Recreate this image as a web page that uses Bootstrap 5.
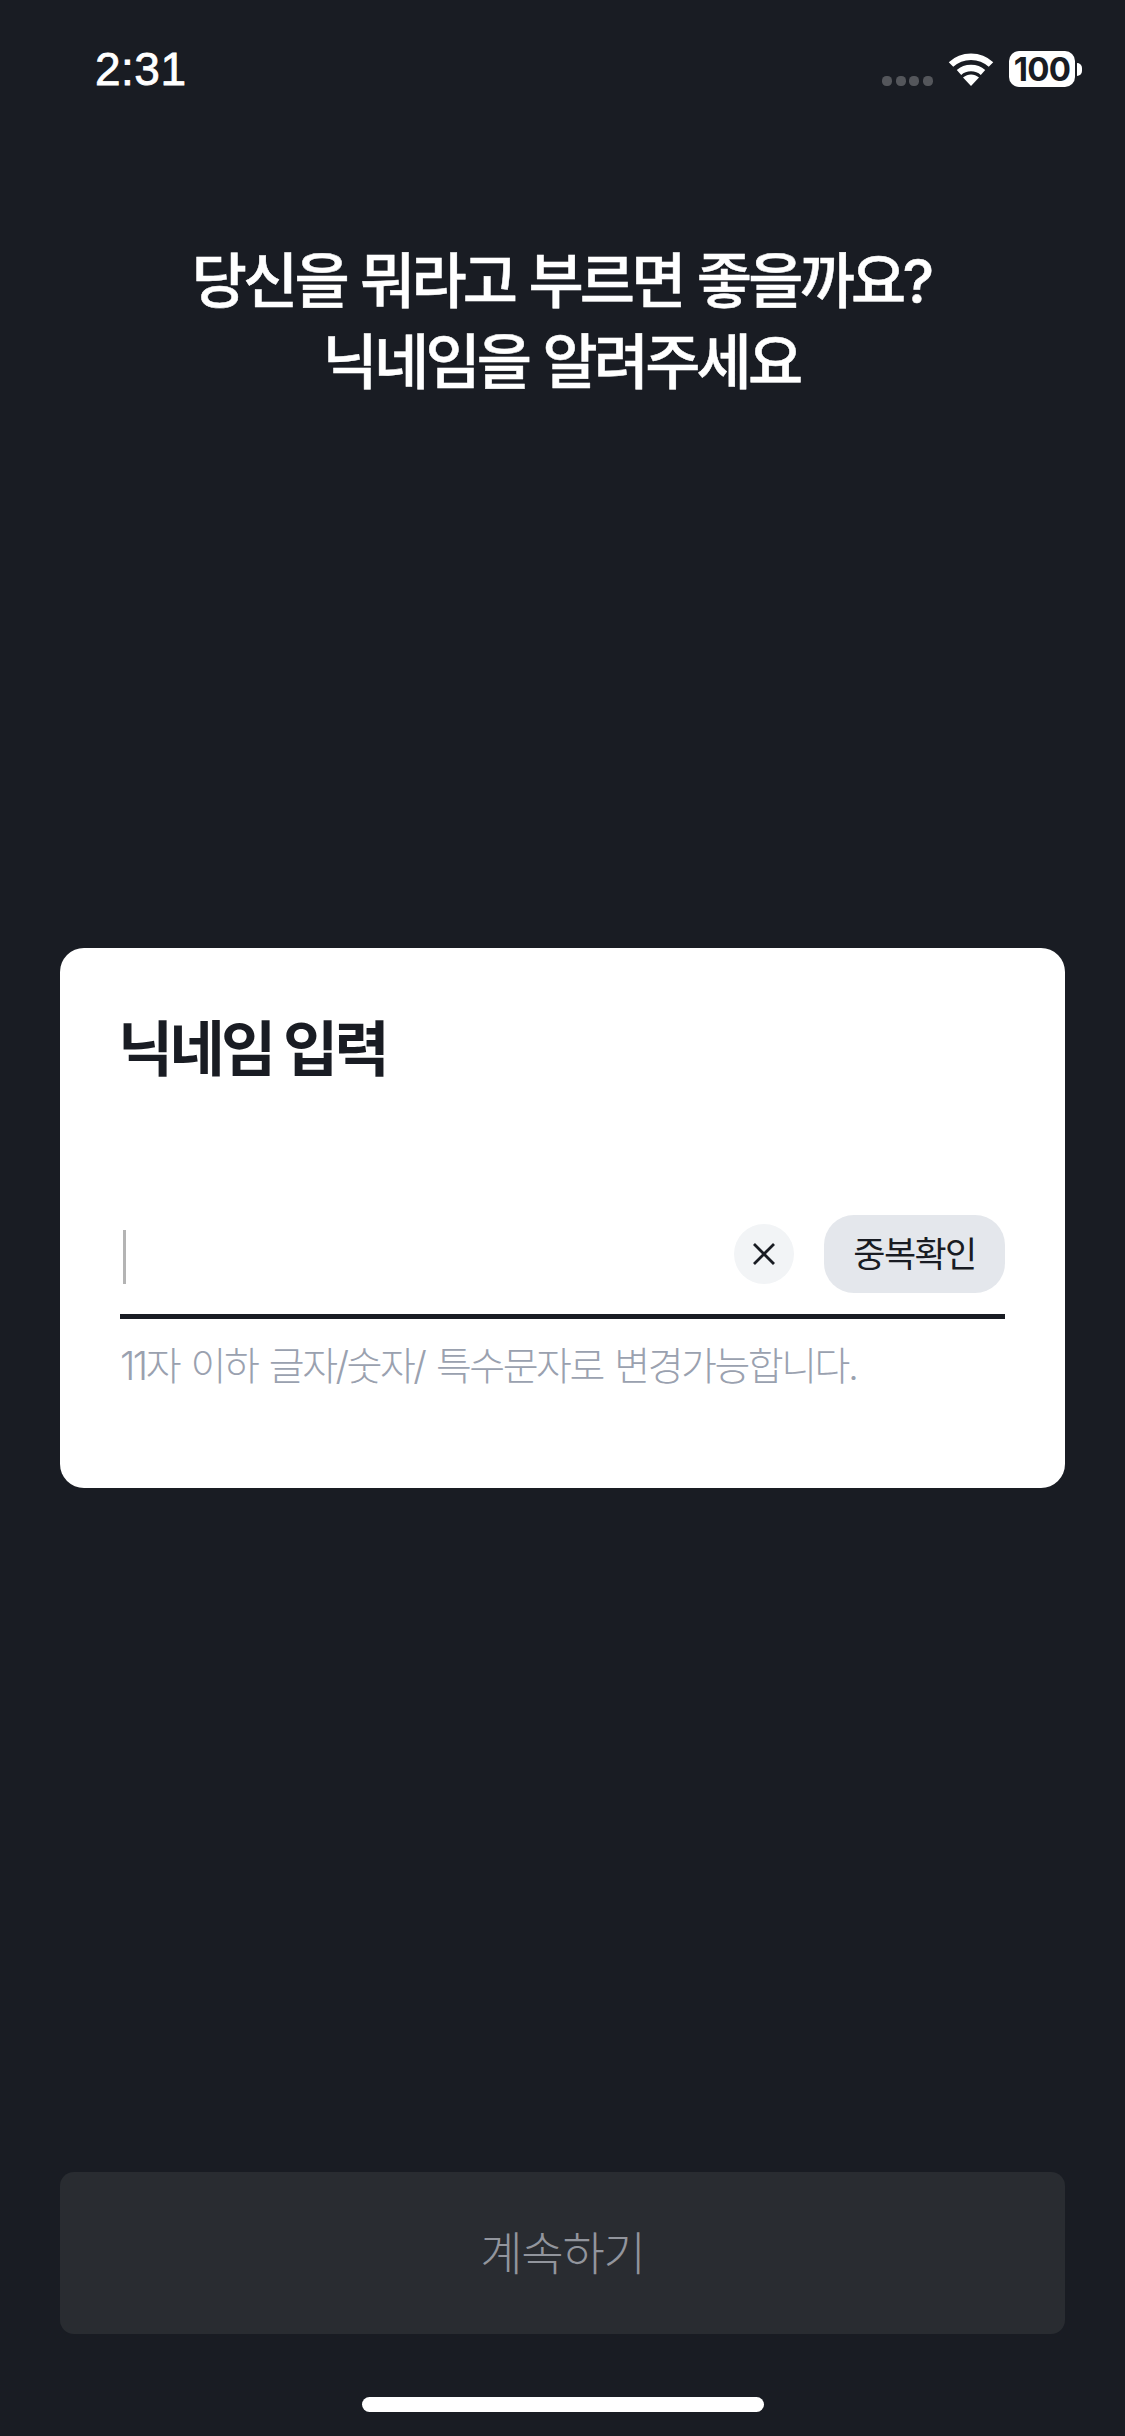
<!DOCTYPE html>
<html lang="ko">
<head>
<meta charset="utf-8">
<title>닉네임 입력</title>
<link rel="stylesheet" href="https://cdn.jsdelivr.net/npm/bootstrap@5.3.0/dist/css/bootstrap.min.css">
<style>
html,body{height:2436px;margin:0}
body{background:#191c23;font-family:"Inter","Noto Sans CJK KR",sans-serif;color:#fff;overflow:hidden}
.screen{height:2436px}
.status-row{height:100px;padding:0 43px 0 95px;flex:none}
.clock{font-family:"Liberation Sans",sans-serif;font-size:46px;font-weight:400;line-height:46px;margin-top:46px;letter-spacing:.5px;-webkit-text-stroke:.8px #fff}
.status-icons{margin-top:51px;height:36px}
.dot-row{gap:3.67px;margin-top:25px;margin-right:15px}
.sig-dot{width:10px;height:10px;border-radius:45%;background:#54565b}
.wifi-ic{width:46px;height:35px;margin-right:15px}
.batt{width:66px;height:36px;background:#fff;border-radius:10px;color:#191c23;font-family:"Inter",sans-serif;font-size:33px;font-weight:700;line-height:36px;letter-spacing:-.8px;text-align:center}
.batt-tip{width:5px;height:13px;background:#fff;border-radius:0 6px 6px 0;margin:12px 0 0 2px}
.head-text{font-size:60px;font-weight:500;line-height:81px;letter-spacing:-3.8px;word-spacing:2px;margin:141px 0 0;padding-right:3px;color:#fff;-webkit-text-stroke:.5px #fff}
.sheet{margin:545px 60px 0;height:540px;background:#fff;border-radius:24px;padding:0 60px;color:#191c23;flex:none}
.sheet-title{font-size:60px;font-weight:700;line-height:70px;letter-spacing:-3.7px;margin:0 0 0 -2px;padding-top:66px;height:261px;color:#191c23}
.field{height:99px;border-bottom:5px solid #191c23;padding:3px 0 0 3px;box-sizing:content-box;margin-top:3px}
.caret-bar{width:3px;height:54px;background:#b4b4b4;margin-top:15px}
.clear-btn{width:60px;height:60px;border-radius:50%;background:#f2f4f6;border:0;padding:0;margin:9px 30px 0 0}
.dup-btn{height:78px;width:181px;border-radius:30px;background:#e4e7ec;border:0;padding:0;font-size:35px;line-height:78px;letter-spacing:-1.6px;color:#191c23;font-weight:400}
.hint{font-size:39px;line-height:50px;letter-spacing:-2.5px;word-spacing:3px;color:#9aa1af;margin:22px 0 0;font-weight:300}
.go-btn{margin:auto 60px 0;height:162px;background:#292c31;border:0;border-radius:14px;color:#92959d;font-size:46px;font-weight:300;letter-spacing:-1.2px;flex:none}
.go-btn:disabled{background:#292c31;color:#92959d;opacity:1}
.home-bar{width:402px;height:15px;background:#fff;border-radius:8px;margin:63px auto 24px;flex:none}
</style>
</head>
<body>
<div class="screen d-flex flex-column">
  <div class="status-row d-flex justify-content-between align-items-start">
    <div class="clock">2:31</div>
    <div class="status-icons d-flex align-items-start">
      <div class="dot-row d-flex"><span class="sig-dot"></span><span class="sig-dot"></span><span class="sig-dot"></span><span class="sig-dot"></span></div>
      <svg class="wifi-ic" viewBox="0 0 46 35" aria-hidden="true"><path d="M3 13.5C14 3 32 3 43 13.5" fill="none" stroke="#fff" stroke-width="6.5" stroke-linecap="butt"/><path d="M11 21.5C17.5 15.5 28.5 15.5 35 21.5" fill="none" stroke="#fff" stroke-width="6.5"/><path d="M15 26.5C20 22.5 26 22.5 31 26.5L23 35Z" fill="#fff"/></svg>
      <div class="batt">100</div>
      <div class="batt-tip"></div>
    </div>
  </div>
  <h1 class="head-text text-center">당신을 뭐라고 부르면 좋을까요?<br>닉네임을 알려주세요</h1>
  <section class="sheet">
    <h2 class="sheet-title">닉네임 입력</h2>
    <div class="field d-flex align-items-start">
      <div class="caret-bar"></div>
      <div class="flex-grow-1"></div>
      <button class="clear-btn d-flex align-items-center justify-content-center" type="button" aria-label="지우기"><svg width="22" height="22" viewBox="0 0 22 22" aria-hidden="true"><path d="M1 1L21 21M21 1L1 21" stroke="#191c23" stroke-width="2.8" fill="none"/></svg></button>
      <button class="dup-btn" type="button">중복확인</button>
    </div>
    <p class="hint">11자 이하 글자/숫자/ 특수문자로 변경가능합니다.</p>
  </section>
  <button class="go-btn btn" type="button" disabled>계속하기</button>
  <div class="home-bar"></div>
</div>
<script src="https://cdn.jsdelivr.net/npm/bootstrap@5.3.0/dist/js/bootstrap.bundle.min.js"></script>
</body>
</html>
